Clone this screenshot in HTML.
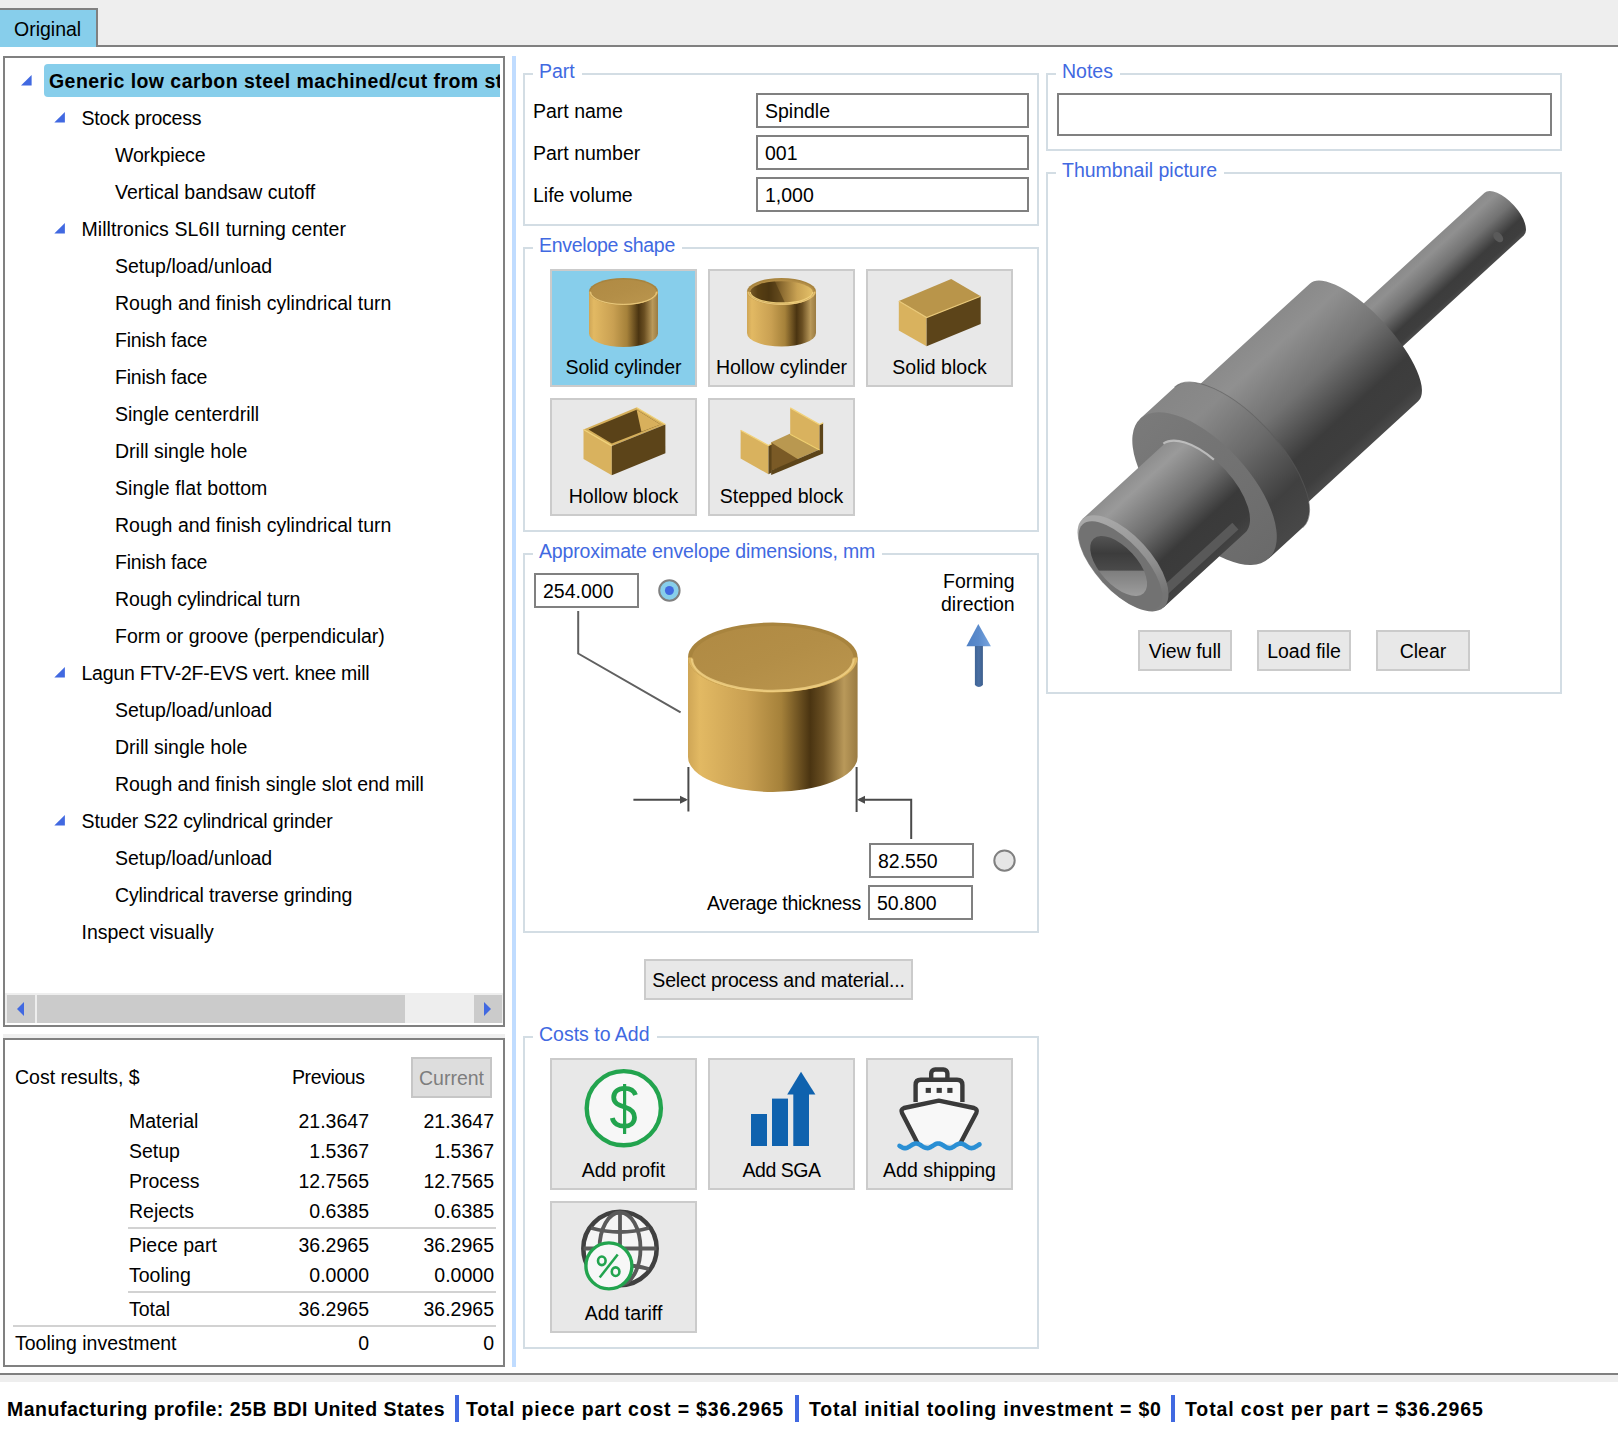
<!DOCTYPE html>
<html><head><meta charset="utf-8">
<style>
html,body{margin:0;padding:0;}
body{width:1618px;height:1429px;position:relative;overflow:hidden;background:#fff;font-family:"Liberation Sans",sans-serif;color:#000;}
.a{position:absolute;box-sizing:border-box;}
.t{position:absolute;white-space:nowrap;font-size:19.5px;line-height:22px;}
.b{font-weight:bold;}
.lbl{position:absolute;background:#fff;padding:0 7px 0 6px;font-size:19.5px;line-height:22px;color:#4169e1;white-space:nowrap;}
.gb{position:absolute;box-sizing:border-box;border:2px solid #d3dde4;}
.tb{position:absolute;box-sizing:border-box;border:2px solid #808080;background:#fff;}
.btn{position:absolute;box-sizing:border-box;border:2px solid #cbcbcb;background:#e8e8e8;}
svg{position:absolute;overflow:visible;}
</style></head>
<body>

<div class="a" style="left:0px;top:0px;width:1618px;height:45px;background:#eeeeee;"></div>
<div class="a" style="left:0px;top:45px;width:1618px;height:2px;background:#808080;"></div>
<div class="a" style="left:-2px;top:8px;width:100px;height:39px;background:#87ceeb;border:2px solid #808080;border-bottom:none;"></div>
<div class="t" style="left:14px;top:18px;">Original</div>
<div class="a" style="left:0px;top:1373px;width:1618px;height:2px;background:#808080;"></div>
<div class="a" style="left:0px;top:1375px;width:1618px;height:7px;background:#eeeeee;"></div>
<div class="a" style="left:512px;top:56px;width:4px;height:1311px;background:#c0dcff;"></div>
<div class="a" style="left:3px;top:56px;width:502px;height:971px;border:2px solid #808080;"></div>
<div class="a" style="left:44px;top:64px;width:456px;height:33px;background:#87ceeb;border-radius:4px 0 0 4px;"></div>
<div class="t b" style="left:49px;top:70px;width:451px;overflow:hidden;letter-spacing:0.45px;">Generic low carbon steel machined/cut from st</div>
<div class="t" style="left:81.5px;top:107px;letter-spacing:-0.2px;">Stock process</div>
<div class="t" style="left:115px;top:144px;letter-spacing:-0.15px;">Workpiece</div>
<div class="t" style="left:115px;top:181px;letter-spacing:0px;">Vertical bandsaw cutoff</div>
<div class="t" style="left:81.5px;top:218px;letter-spacing:0.07px;">Milltronics SL6II turning center</div>
<div class="t" style="left:115px;top:255px;letter-spacing:0px;">Setup/load/unload</div>
<div class="t" style="left:115px;top:292px;letter-spacing:0px;">Rough and finish cylindrical turn</div>
<div class="t" style="left:115px;top:329px;letter-spacing:-0.2px;">Finish face</div>
<div class="t" style="left:115px;top:366px;letter-spacing:-0.2px;">Finish face</div>
<div class="t" style="left:115px;top:403px;letter-spacing:0px;">Single centerdrill</div>
<div class="t" style="left:115px;top:440px;letter-spacing:0px;">Drill single hole</div>
<div class="t" style="left:115px;top:477px;letter-spacing:0.1px;">Single flat bottom</div>
<div class="t" style="left:115px;top:514px;letter-spacing:0px;">Rough and finish cylindrical turn</div>
<div class="t" style="left:115px;top:551px;letter-spacing:-0.2px;">Finish face</div>
<div class="t" style="left:115px;top:588px;letter-spacing:-0.1px;">Rough cylindrical turn</div>
<div class="t" style="left:115px;top:625px;letter-spacing:0px;">Form or groove (perpendicular)</div>
<div class="t" style="left:81.5px;top:662px;letter-spacing:-0.25px;">Lagun FTV-2F-EVS vert. knee mill</div>
<div class="t" style="left:115px;top:699px;letter-spacing:0px;">Setup/load/unload</div>
<div class="t" style="left:115px;top:736px;letter-spacing:0px;">Drill single hole</div>
<div class="t" style="left:115px;top:773px;letter-spacing:-0.06px;">Rough and finish single slot end mill</div>
<div class="t" style="left:81.5px;top:810px;letter-spacing:-0.12px;">Studer S22 cylindrical grinder</div>
<div class="t" style="left:115px;top:847px;letter-spacing:0px;">Setup/load/unload</div>
<div class="t" style="left:115px;top:884px;letter-spacing:-0.12px;">Cylindrical traverse grinding</div>
<div class="t" style="left:81.5px;top:921px;letter-spacing:0px;">Inspect visually</div>
<svg style="left:0;top:0" width="1" height="1"><polygon points="21,85.6 31.6,75.1 31.6,85.6" fill="#4169e1"/><polygon points="54.3,122.6 64.89999999999999,112.1 64.89999999999999,122.6" fill="#4169e1"/><polygon points="54.3,233.6 64.89999999999999,223.1 64.89999999999999,233.6" fill="#4169e1"/><polygon points="54.3,677.6 64.89999999999999,667.1 64.89999999999999,677.6" fill="#4169e1"/><polygon points="54.3,825.6 64.89999999999999,815.1 64.89999999999999,825.6" fill="#4169e1"/></svg>
<div class="a" style="left:5px;top:993px;width:498px;height:30px;background:#eeeeee;"></div>
<div class="a" style="left:7px;top:995px;width:28px;height:28px;background:#cbcbcb;"></div>
<div class="a" style="left:37px;top:995px;width:368px;height:28px;background:#cbcbcb;"></div>
<div class="a" style="left:474px;top:995px;width:28px;height:28px;background:#cbcbcb;"></div>
<svg style="left:0;top:0" width="1" height="1"><polygon points="17,1009 24,1002 24,1016" fill="#4169e1"/><polygon points="484,1002 491,1009 484,1016" fill="#4169e1"/></svg>
<div class="a" style="left:3px;top:1034px;width:502px;height:4px;background:#efefef;"></div>
<div class="a" style="left:3px;top:1038px;width:502px;height:329px;border:2px solid #808080;"></div>
<div class="t" style="left:15px;top:1066px;">Cost results, $</div>
<div class="t" style="left:292px;top:1066px;letter-spacing:-0.4px;">Previous</div>
<div class="a" style="left:411px;top:1057px;width:81px;height:41px;background:#dddddd;border:2px solid #c6c6c6;"></div>
<div class="t" style="left:419px;top:1067px;color:#7d7d7d;">Current</div>
<div class="t" style="left:129px;top:1110px;">Material</div>
<div class="t" style="left:268px;top:1110px;width:101px;text-align:right;">21.3647</div>
<div class="t" style="left:393px;top:1110px;width:101px;text-align:right;">21.3647</div>
<div class="t" style="left:129px;top:1140px;">Setup</div>
<div class="t" style="left:268px;top:1140px;width:101px;text-align:right;">1.5367</div>
<div class="t" style="left:393px;top:1140px;width:101px;text-align:right;">1.5367</div>
<div class="t" style="left:129px;top:1170px;">Process</div>
<div class="t" style="left:268px;top:1170px;width:101px;text-align:right;">12.7565</div>
<div class="t" style="left:393px;top:1170px;width:101px;text-align:right;">12.7565</div>
<div class="t" style="left:129px;top:1200px;">Rejects</div>
<div class="t" style="left:268px;top:1200px;width:101px;text-align:right;">0.6385</div>
<div class="t" style="left:393px;top:1200px;width:101px;text-align:right;">0.6385</div>
<div class="t" style="left:129px;top:1234px;">Piece part</div>
<div class="t" style="left:268px;top:1234px;width:101px;text-align:right;">36.2965</div>
<div class="t" style="left:393px;top:1234px;width:101px;text-align:right;">36.2965</div>
<div class="t" style="left:129px;top:1264px;">Tooling</div>
<div class="t" style="left:268px;top:1264px;width:101px;text-align:right;">0.0000</div>
<div class="t" style="left:393px;top:1264px;width:101px;text-align:right;">0.0000</div>
<div class="t" style="left:129px;top:1298px;">Total</div>
<div class="t" style="left:268px;top:1298px;width:101px;text-align:right;">36.2965</div>
<div class="t" style="left:393px;top:1298px;width:101px;text-align:right;">36.2965</div>
<div class="t" style="left:15px;top:1332px;">Tooling investment</div>
<div class="t" style="left:268px;top:1332px;width:101px;text-align:right;">0</div>
<div class="t" style="left:393px;top:1332px;width:101px;text-align:right;">0</div>
<div class="a" style="left:128px;top:1227px;width:368px;height:2px;background:#d2d2d2;"></div>
<div class="a" style="left:128px;top:1291px;width:368px;height:2px;background:#d2d2d2;"></div>
<div class="a" style="left:13px;top:1325px;width:483px;height:2px;background:#d2d2d2;"></div>
<div class="t b" style="left:7px;top:1398px;letter-spacing:0.5px;">Manufacturing profile: 25B BDI United States</div>
<div class="a" style="left:455px;top:1395px;width:4px;height:27px;background:#4169e1;"></div>
<div class="t b" style="left:466px;top:1398px;letter-spacing:0.82px;">Total piece part cost = $36.2965</div>
<div class="a" style="left:795px;top:1395px;width:4px;height:27px;background:#4169e1;"></div>
<div class="t b" style="left:809px;top:1398px;letter-spacing:0.77px;">Total initial tooling investment = $0</div>
<div class="a" style="left:1171px;top:1395px;width:4px;height:27px;background:#4169e1;"></div>
<div class="t b" style="left:1185px;top:1398px;letter-spacing:0.88px;">Total cost per part = $36.2965</div>
<div class="gb" style="left:523px;top:73px;width:516px;height:153px;"></div>
<div class="lbl" style="left:533px;top:60px;letter-spacing:0px;">Part</div>
<div class="t" style="left:533px;top:100px;">Part name</div>
<div class="t" style="left:533px;top:142px;">Part number</div>
<div class="t" style="left:533px;top:184px;">Life volume</div>
<div class="tb" style="left:756px;top:93px;width:273px;height:35px;"></div>
<div class="t" style="left:765px;top:100px;">Spindle</div>
<div class="tb" style="left:756px;top:135px;width:273px;height:35px;"></div>
<div class="t" style="left:765px;top:142px;">001</div>
<div class="tb" style="left:756px;top:177px;width:273px;height:35px;"></div>
<div class="t" style="left:765px;top:184px;">1,000</div>
<div class="gb" style="left:523px;top:247px;width:516px;height:285px;"></div>
<div class="lbl" style="left:533px;top:234px;letter-spacing:-0.28px;">Envelope shape</div>
<div class="gb" style="left:523px;top:553px;width:516px;height:380px;"></div>
<div class="lbl" style="left:533px;top:540px;letter-spacing:-0.15px;">Approximate envelope dimensions, mm</div>
<div class="gb" style="left:523px;top:1036px;width:516px;height:313px;"></div>
<div class="lbl" style="left:533px;top:1023px;letter-spacing:0px;">Costs to Add</div>
<div class="gb" style="left:1046px;top:73px;width:516px;height:78px;"></div>
<div class="lbl" style="left:1056px;top:60px;letter-spacing:0px;">Notes</div>
<div class="tb" style="left:1057px;top:93px;width:495px;height:43px;"></div>
<div class="gb" style="left:1046px;top:172px;width:516px;height:522px;"></div>
<div class="lbl" style="left:1056px;top:159px;letter-spacing:0px;">Thumbnail picture</div>
<svg style="left:0;top:0" width="0" height="0"><defs>
<linearGradient id="gside" x1="0" y1="0" x2="1" y2="0">
<stop offset="0" stop-color="#cfa656"/><stop offset="0.07" stop-color="#e2b963"/><stop offset="0.35" stop-color="#c9a052"/>
<stop offset="0.55" stop-color="#a5813a"/><stop offset="0.72" stop-color="#4a3411"/><stop offset="0.80" stop-color="#6a4f22"/>
<stop offset="0.92" stop-color="#b9995a"/><stop offset="1" stop-color="#9a7b42"/></linearGradient>
<linearGradient id="gtop" x1="0" y1="0" x2="1" y2="1">
<stop offset="0" stop-color="#b08a43"/><stop offset="0.5" stop-color="#b38e47"/><stop offset="1" stop-color="#bb964e"/></linearGradient>
<linearGradient id="ghole" x1="0" y1="0" x2="1" y2="0"><stop offset="0" stop-color="#b08a45"/><stop offset="0.12" stop-color="#6a4c18"/><stop offset="0.3" stop-color="#4e3812"/><stop offset="0.5" stop-color="#8a6a30"/><stop offset="0.75" stop-color="#c9a253"/><stop offset="1" stop-color="#e4c068"/></linearGradient>
<linearGradient id="garrow" x1="0" y1="0" x2="1" y2="0">
<stop offset="0" stop-color="#4f80c4"/><stop offset="0.5" stop-color="#5b8bcc"/><stop offset="1" stop-color="#79a6e0"/></linearGradient>
<linearGradient id="gshaft" x1="0" y1="0" x2="1" y2="0">
<stop offset="0" stop-color="#3f6496"/><stop offset="0.5" stop-color="#4a6fa3"/><stop offset="1" stop-color="#3c5e8c"/></linearGradient>
</defs></svg>
<div class="btn" style="left:550px;top:269px;width:147px;height:118px;background:#87ceeb;"></div>
<div class="t" style="left:550px;top:356px;width:147px;text-align:center;">Solid cylinder</div>
<div class="btn" style="left:708px;top:269px;width:147px;height:118px;background:#e8e8e8;"></div>
<div class="t" style="left:708px;top:356px;width:147px;text-align:center;">Hollow cylinder</div>
<div class="btn" style="left:866px;top:269px;width:147px;height:118px;background:#e8e8e8;"></div>
<div class="t" style="left:866px;top:356px;width:147px;text-align:center;">Solid block</div>
<div class="btn" style="left:550px;top:398px;width:147px;height:118px;background:#e8e8e8;"></div>
<div class="t" style="left:550px;top:485px;width:147px;text-align:center;">Hollow block</div>
<div class="btn" style="left:708px;top:398px;width:147px;height:118px;background:#e8e8e8;"></div>
<div class="t" style="left:708px;top:485px;width:147px;text-align:center;">Stepped block</div>
<svg style="left:0;top:0" width="1" height="1"><path d="M589.0,291.5 L589.0,333.5 A34.5,13.5 0 0 0 658.0,333.5 L658.0,291.5 Z" fill="url(#gside)"/><ellipse cx="623.5" cy="291.5" rx="34.5" ry="13.5" fill="#a8843e"/><path d="M589.0,291.5 A34.5,13.5 0 0 0 658.0,291.5 Z" fill="#dcb562"/><ellipse cx="623.5" cy="291.9068396226415" rx="32.87264150943396" ry="12.442216981132075" fill="url(#gtop)"/><path d="M590.627358490566,291.9068396226415 A32.87264150943396,12.442216981132075 0 0 0 656.372641509434,291.9068396226415" fill="none" stroke="#f4d68a" stroke-width="1" opacity="0.75"/><path d="M747.0,291.5 L747.0,333 A34.5,13.5 0 0 0 816.0,333 L816.0,291.5 Z" fill="url(#gside)"/><ellipse cx="781.5" cy="291.5" rx="34.5" ry="13.5" fill="#a8843e"/><path d="M747.0,291.5 A34.5,13.5 0 0 0 816.0,291.5 Z" fill="#dcb562"/><ellipse cx="781.5" cy="291.9068396226415" rx="32.87264150943396" ry="12.442216981132075" fill="url(#gtop)"/><path d="M748.627358490566,291.9068396226415 A32.87264150943396,12.442216981132075 0 0 0 814.372641509434,291.9068396226415" fill="none" stroke="#f4d68a" stroke-width="1" opacity="0.75"/><clipPath id="hcclip"><ellipse cx="781.5" cy="292.1" rx="31.3" ry="10.9"/></clipPath><ellipse cx="781.5" cy="292.1" rx="31.3" ry="10.9" fill="url(#ghole)"/><polygon clip-path="url(#hcclip)" points="741.5,272.1 770.5,272.1 786.0,305.0 741.5,305.0" fill="#4a3410" opacity="0.55"/><path d="M750.2,292.1 A31.3,10.9 0 0 0 812.8,292.1" fill="none" stroke="#f2d27c" stroke-width="1.3" opacity="0.9"/><polygon points="898.8,301.1 951.2,279 980.7,296.2 926.6,317.5" fill="#b9954a"/><polygon points="898.8,301.1 926.6,317.5 926.6,346.2 898.8,330.6" fill="#d9b25e"/><polygon points="926.6,317.5 980.7,296.2 980.7,324 926.6,346.2" fill="#5c4419"/><polyline points="898.8,301.1 926.6,317.5 980.7,296.2" fill="none" stroke="#e9c878" stroke-width="1.2"/><polygon points="583.5,429.5 636.4,407.4 665.4,424.6 611.8,445.9" fill="#d4ae5a"/><polygon points="588.5,429.6 636.6,409.8 660.5,424.5 611.8,443.4" fill="#5a4218"/><polygon points="636.6,409.8 660.5,424.5 641.4,431.7" fill="#d8b05c"/><polygon points="583.5,429.5 611.8,445.9 611.8,475.3 583.5,459" fill="#d9b25e"/><polygon points="611.8,445.9 665.4,424.6 665.4,453.2 611.8,475.3" fill="#5c4419"/><polyline points="583.5,429.5 611.8,445.9" fill="none" stroke="#f0d27a" stroke-width="1.4"/><polyline points="636.4,407.4 665.4,424.6" fill="none" stroke="#f0d27a" stroke-width="1.2"/><polygon points="790.2,407.9 819.6,424.6 819.6,450 790.2,434.2" fill="#d9b25e"/><polygon points="819.6,424.6 823.1,422.8 823.1,451 819.6,452" fill="#5c4419"/><polygon points="771.2,442.2 789.8,433.8 819.6,449.5 771.2,470.5" fill="#b99850"/><polygon points="771.2,442.5 777.5,446.5 800,460.5 771.2,470.5" fill="#7a5a26"/><polygon points="771.2,470.5 819.6,449.5 823.1,451 823.1,453.5 771.2,475" fill="#5c4419"/><polygon points="740.6,430.2 768.5,445.5 768.5,474.2 740.6,458.4" fill="#d9b25e"/><polygon points="768.5,445.5 771.7,443.7 771.7,472.5 768.5,474.2" fill="#5c4419"/><polyline points="740.6,430.2 768.5,445.5 771.7,443.7" fill="none" stroke="#f2d27a" stroke-width="1.3"/><polyline points="790.2,407.9 819.6,424.6 823.1,422.8" fill="none" stroke="#f2d27a" stroke-width="1.3"/><line x1="790.2" y1="434.2" x2="819.6" y2="450" stroke="#f0d070" stroke-width="1.2"/></svg>
<div class="tb" style="left:534px;top:573px;width:105px;height:35px;"></div>
<div class="t" style="left:543px;top:580px;">254.000</div>
<div class="tb" style="left:869px;top:843px;width:105px;height:35px;"></div>
<div class="t" style="left:878px;top:850px;">82.550</div>
<div class="tb" style="left:868px;top:885px;width:105px;height:35px;"></div>
<div class="t" style="left:877px;top:892px;">50.800</div>
<div class="t" style="left:707px;top:892px;letter-spacing:-0.3px;">Average thickness</div>
<div class="t" style="left:943px;top:570px;">Forming</div>
<div class="t" style="left:941px;top:593px;">direction</div>
<svg style="left:0;top:0" width="1" height="1"><circle cx="669.4" cy="590.5" r="10.2" fill="#87ceeb" stroke="#808080" stroke-width="2"/><circle cx="669.4" cy="590.5" r="4.5" fill="#4169e1"/><circle cx="1004.5" cy="860.6" r="10.2" fill="#e6e6e6" stroke="#808080" stroke-width="2"/><path d="M688.0,657.5 L688.0,757 A84.8,35 0 0 0 857.5999999999999,757 L857.5999999999999,657.5 Z" fill="url(#gside)"/><ellipse cx="772.8" cy="657.5" rx="84.8" ry="35" fill="#a8843e"/><path d="M688.0,657.5 A84.8,35 0 0 0 857.5999999999999,657.5 Z" fill="#dcb562"/><ellipse cx="772.8" cy="658.5" rx="80.8" ry="32.4" fill="url(#gtop)"/><path d="M692.0,658.5 A80.8,32.4 0 0 0 853.5999999999999,658.5" fill="none" stroke="#f4d68a" stroke-width="2.2" opacity="0.75"/><polyline points="578.2,611 578.2,653.5 680.6,712.3" fill="none" stroke="#606060" stroke-width="2"/><line x1="633.4" y1="799.7" x2="686" y2="799.7" stroke="#4a4a4a" stroke-width="2"/><polygon points="688,799.7 680,795.7 680,803.7" fill="#4a4a4a"/><line x1="688.4" y1="767" x2="688.4" y2="811.5" stroke="#4a4a4a" stroke-width="2"/><line x1="856.6" y1="767" x2="856.6" y2="812" stroke="#4a4a4a" stroke-width="2"/><polyline points="859,799.7 911.2,799.7 911.2,839" fill="none" stroke="#4a4a4a" stroke-width="2"/><polygon points="857,799.7 865,795.7 865,803.7" fill="#4a4a4a"/><polygon points="978.3,624 990.9,646.2 966.4,646.2" fill="url(#garrow)"/><path d="M974.9,646 L982.9,646 L982.9,685 Q978.9,689 974.9,685 Z" fill="url(#gshaft)"/></svg>
<div class="btn" style="left:644px;top:959px;width:269px;height:41px;"></div>
<div class="t" style="left:644px;top:969px;width:269px;text-align:center;letter-spacing:-0.15px;">Select process and material...</div>
<div class="btn" style="left:550px;top:1058px;width:147px;height:132px;"></div>
<div class="t" style="left:550px;top:1159px;width:147px;text-align:center;letter-spacing:0px;">Add profit</div>
<div class="btn" style="left:708px;top:1058px;width:147px;height:132px;"></div>
<div class="t" style="left:708px;top:1159px;width:147px;text-align:center;letter-spacing:-0.5px;">Add SGA</div>
<div class="btn" style="left:866px;top:1058px;width:147px;height:132px;"></div>
<div class="t" style="left:866px;top:1159px;width:147px;text-align:center;letter-spacing:0px;">Add shipping</div>
<div class="btn" style="left:550px;top:1201px;width:147px;height:132px;"></div>
<div class="t" style="left:550px;top:1302px;width:147px;text-align:center;letter-spacing:0px;">Add tariff</div>
<svg style="left:0;top:0" width="1" height="1"><circle cx="623.8" cy="1108.2" r="37.1" fill="#f7f7f7" stroke="#22a44e" stroke-width="4.4"/><line x1="624.6" y1="1084" x2="624.6" y2="1134" stroke="#22a44e" stroke-width="3.2"/><path d="M635.5,1095 C634,1090.5 629.5,1088.3 624.6,1088.3 C618,1088.3 613.7,1092 613.7,1097.3 C613.7,1103.5 619,1105.3 624.6,1107 C630.5,1108.8 634.5,1111.5 634.5,1117.5 C634.5,1123 630,1126.2 624.6,1126.2 C618.5,1126.2 613.5,1123.5 612.3,1118" fill="none" stroke="#22a44e" stroke-width="4.8"/><rect x="751" y="1114" width="16" height="32" fill="#0f62ae"/><rect x="772" y="1098.6" width="16" height="47.4" fill="#0f62ae"/><rect x="793.3" y="1093" width="15.7" height="53" fill="#0f62ae"/><polygon points="787.2,1094.4 815.4,1094.4 801,1071.8" fill="#0f62ae"/><rect x="931.2" y="1069.5" width="16.2" height="12" rx="4" fill="#f8f8f8" stroke="#3a3a3a" stroke-width="4.4"/><path d="M915.6,1102 V1085 Q915.6,1079.8 920.8,1079.8 H957 Q962.4,1079.8 962.4,1085 V1102" fill="#f8f8f8" stroke="#3a3a3a" stroke-width="4.4"/><rect x="925.6999999999999" y="1087.9" width="5.2" height="5" fill="#3a3a3a"/><rect x="936.6" y="1087.9" width="5.2" height="5" fill="#3a3a3a"/><rect x="947.3" y="1087.9" width="5.2" height="5" fill="#3a3a3a"/><path d="M938.8,1100.6 L974,1108 Q978,1109.5 976.3,1113 L960,1144 L918,1144 L902,1113 Q900.5,1109.5 904,1108 Z" fill="#f8f8f8"/><path d="M918,1144 L902,1113 Q900.5,1109.5 904,1108 L938.8,1100.6 L974,1108 Q978,1109.5 976.3,1113 L960,1144" fill="none" stroke="#3a3a3a" stroke-width="4.4" stroke-linejoin="round"/><polyline points="899.5,1145.83 900.5,1146.47 901.5,1147.06 902.5,1147.55 903.5,1147.90 904.5,1148.08 905.5,1148.08 906.5,1147.90 907.5,1147.55 908.5,1147.06 909.5,1146.47 910.5,1145.83 911.5,1145.19 912.5,1144.59 913.5,1144.10 914.5,1143.73 915.5,1143.53 916.5,1143.51 917.5,1143.68 918.5,1144.01 919.5,1144.49 920.5,1145.06 921.5,1145.70 922.5,1146.35 923.5,1146.95 924.5,1147.46 925.5,1147.84 926.5,1148.06 927.5,1148.09 928.5,1147.95 929.5,1147.63 930.5,1147.17 931.5,1146.60 932.5,1145.96 933.5,1145.32 934.5,1144.71 935.5,1144.19 936.5,1143.79 937.5,1143.56 938.5,1143.50 939.5,1143.63 940.5,1143.93 941.5,1144.38 942.5,1144.94 943.5,1145.57 944.5,1146.22 945.5,1146.84 946.5,1147.37 947.5,1147.78 948.5,1148.03 949.5,1148.10 950.5,1147.99 951.5,1147.71 952.5,1147.27 953.5,1146.72 954.5,1146.09 955.5,1145.44 956.5,1144.82 957.5,1144.28 958.5,1143.86 959.5,1143.59 960.5,1143.50 961.5,1143.59 962.5,1143.86 963.5,1144.28 964.5,1144.82 965.5,1145.44 966.5,1146.09 967.5,1146.72 968.5,1147.27 969.5,1147.71 970.5,1147.99 971.5,1148.10 972.5,1148.03 973.5,1147.78 974.5,1147.37 975.5,1146.84 976.5,1146.22 977.5,1145.57 978.5,1144.94 979.5,1144.38" fill="none" stroke="#2a8fd4" stroke-width="4.6" stroke-linecap="round"/><circle cx="620" cy="1248.5" r="36.7" fill="#f5f5f5" stroke="#404040" stroke-width="4.5"/><ellipse cx="620" cy="1248.5" rx="20.5" ry="36" fill="none" stroke="#5a5a5a" stroke-width="3.8"/><line x1="620" y1="1212" x2="620" y2="1285" stroke="#5a5a5a" stroke-width="3.8"/><line x1="583.5" y1="1248.5" x2="656.5" y2="1248.5" stroke="#5a5a5a" stroke-width="3.8"/><path d="M591,1228 Q620,1236 649,1228" fill="none" stroke="#5a5a5a" stroke-width="3.8"/><path d="M591,1269 Q620,1261 649,1269" fill="none" stroke="#5a5a5a" stroke-width="3.8"/><circle cx="608.9" cy="1265.9" r="23" fill="#f7f7f7" stroke="#22a44e" stroke-width="3.4"/><ellipse cx="601.8" cy="1260.8" rx="3.8" ry="4.3" fill="none" stroke="#22a44e" stroke-width="2.6"/><ellipse cx="615.6" cy="1271.7" rx="3.8" ry="4.3" fill="none" stroke="#22a44e" stroke-width="2.6"/><line x1="617.7" y1="1254.5" x2="599.7" y2="1277.5" stroke="#22a44e" stroke-width="2.5"/></svg>
<div class="btn" style="left:1138px;top:630px;width:94px;height:41px;"></div>
<div class="t" style="left:1138px;top:640px;width:94px;text-align:center;">View full</div>
<div class="btn" style="left:1257px;top:630px;width:94px;height:41px;"></div>
<div class="t" style="left:1257px;top:640px;width:94px;text-align:center;">Load file</div>
<div class="btn" style="left:1376px;top:630px;width:94px;height:41px;"></div>
<div class="t" style="left:1376px;top:640px;width:94px;text-align:center;">Clear</div>
<svg style="left:0;top:0" width="1" height="1"><defs><linearGradient id="gsh" gradientUnits="userSpaceOnUse" x1="0" y1="-29" x2="0" y2="29"><stop offset="0" stop-color="#8a8a8a"/><stop offset="0.15" stop-color="#909090"/><stop offset="0.45" stop-color="#727272"/><stop offset="0.75" stop-color="#3c3c3c"/><stop offset="0.92" stop-color="#3e3e3e"/><stop offset="1" stop-color="#4a4a4a"/></linearGradient><linearGradient id="gbo" gradientUnits="userSpaceOnUse" x1="0" y1="-80" x2="0" y2="80"><stop offset="0" stop-color="#8a8a8a"/><stop offset="0.15" stop-color="#909090"/><stop offset="0.45" stop-color="#727272"/><stop offset="0.75" stop-color="#3c3c3c"/><stop offset="0.92" stop-color="#3e3e3e"/><stop offset="1" stop-color="#4a4a4a"/></linearGradient><linearGradient id="gfl" gradientUnits="userSpaceOnUse" x1="0" y1="-95" x2="0" y2="95"><stop offset="0" stop-color="#868686"/><stop offset="0.2" stop-color="#8a8a8a"/><stop offset="0.5" stop-color="#6a6a6a"/><stop offset="0.8" stop-color="#404040"/><stop offset="1" stop-color="#484848"/></linearGradient><linearGradient id="gtu" gradientUnits="userSpaceOnUse" x1="0" y1="-60" x2="0" y2="60"><stop offset="0" stop-color="#8e8e8e"/><stop offset="0.12" stop-color="#9a9a9a"/><stop offset="0.45" stop-color="#6c6c6c"/><stop offset="0.7" stop-color="#3a3a3a"/><stop offset="0.9" stop-color="#3c3c3c"/><stop offset="1" stop-color="#444444"/></linearGradient><linearGradient id="gbore" gradientUnits="userSpaceOnUse" x1="16.3" y1="-23.1" x2="-24.3" y2="21.1"><stop offset="0" stop-color="#555555"/><stop offset="0.3" stop-color="#3c3c3c"/><stop offset="0.58" stop-color="#4a4a4a"/><stop offset="0.6" stop-color="#7e7e7e"/><stop offset="1" stop-color="#9c9c9c"/></linearGradient><linearGradient id="gface" gradientUnits="userSpaceOnUse" x1="0" y1="-95" x2="0" y2="95"><stop offset="0" stop-color="#7a7a7a"/><stop offset="1" stop-color="#6a6a6a"/></linearGradient><linearGradient id="gcham" gradientUnits="userSpaceOnUse" x1="28" y1="-40" x2="-10" y2="40"><stop offset="0" stop-color="#a8a8a8"/><stop offset="0.6" stop-color="#909090"/><stop offset="1" stop-color="#747474"/></linearGradient></defs><g transform="translate(1123,563.3) rotate(-42.5)"><path d="M320,-29 L517,-29 A13,29 0 0 1 517,29 L320,29 Z" fill="url(#gsh)"/><ellipse cx="497" cy="13" rx="4" ry="6" fill="#5a5a5a"/><path d="M157,-80 L327,-80 A28,80 0 0 1 327,80 L157,80 Z" fill="url(#gbo)"/><path d="M110.6,-95 L157,-95 A40,95 0 0 1 157,95 L110.6,95 Z" fill="url(#gfl)"/><path d="M157,-95 A40,95 0 0 1 157,95" fill="none" stroke="#5a5a5a" stroke-width="1" opacity="0.6"/><ellipse cx="110.6" cy="0" rx="45" ry="95" fill="url(#gface)"/><path d="M0,-60 L110.6,-60 A28,60 0 0 1 110.6,60 L0,60 Z" fill="url(#gtu)"/><rect x="8" y="44" width="100" height="9" fill="#595959"/><path d="M110.6,-61 A29,61 0 0 1 137,-15" fill="none" stroke="#c4c4c4" stroke-width="2.2" opacity="0.85"/><ellipse cx="0" cy="0" rx="28" ry="60" fill="url(#gcham)"/><ellipse cx="-3.5" cy="0" rx="24" ry="56" fill="#727272"/><ellipse cx="-5" cy="-1" rx="18.5" ry="37" fill="url(#gbore)"/></g></svg>
</body></html>
